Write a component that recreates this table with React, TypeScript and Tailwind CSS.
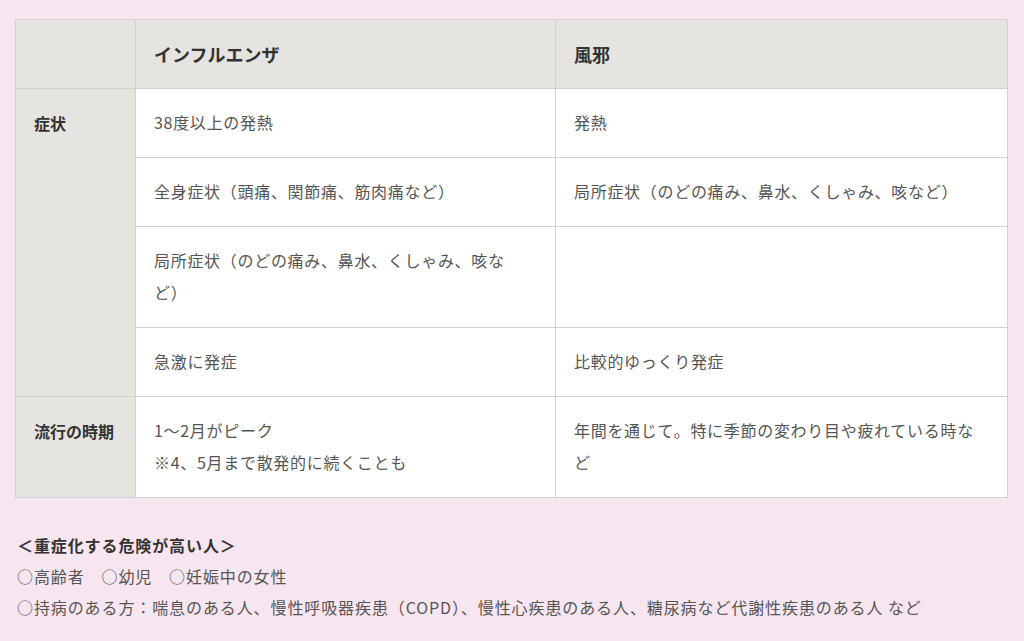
import React from 'react';

const font = { fontFamily: '"Noto Sans CJK JP", "Noto Sans", sans-serif' };

interface Row {
  head?: string;
  span?: number;
  flu: React.ReactNode;
  cold: React.ReactNode;
}

const rows: Row[] = [
  { head: '症状', span: 4, flu: '38度以上の発熱', cold: '発熱' },
  { flu: '全身症状（頭痛、関節痛、筋肉痛など）', cold: '局所症状（のどの痛み、鼻水、くしゃみ、咳など）' },
  { flu: '局所症状（のどの痛み、鼻水、くしゃみ、咳など）', cold: '' },
  { flu: '急激に発症', cold: '比較的ゆっくり発症' },
  {
    head: '流行の時期',
    span: 1,
    flu: (
      <>
        1～2月がピーク
        <br />
        ※4、5月まで散発的に続くことも
      </>
    ),
    cold: '年間を通じて。特に季節の変わり目や疲れている時など',
  },
];

const App: React.FC = () => {
  return (
    <div className="min-h-[641px] w-[1024px] bg-[#f7e6ef] pt-[19px] px-[15px]" style={font}>
      <table className="w-[992px] border-collapse border border-[#d3d1ce] table-fixed">
        <colgroup>
          <col className="w-[120px]" />
          <col className="w-[420px]" />
          <col className="w-[452px]" />
        </colgroup>
        <thead>
          <tr className="h-[69px] bg-[#e6e4e1]">
            <th className="border border-[#d3d1ce]"></th>
            <th className="border border-[#d3d1ce] pl-[18px] text-left text-[18px] font-bold text-[#333]">
              インフルエンザ
            </th>
            <th className="border border-[#d3d1ce] pl-[18px] text-left text-[18px] font-bold text-[#333]">
              風邪
            </th>
          </tr>
        </thead>
        <tbody>
          {rows.map((r, i) => (
            <tr key={i}>
              {r.head && (
                <th
                  rowSpan={r.span}
                  className="border border-[#d3d1ce] bg-[#e6e4e1] pl-[18px] pt-[18px] align-top text-left text-[16px] leading-[32px] font-bold text-[#333]"
                >
                  {r.head}
                </th>
              )}
              <td className="border border-[#d3d1ce] bg-white pl-[18px] pr-[40px] pt-[17px] pb-[19px] align-top text-[16px] leading-[32px] tracking-[0.7px] text-[#555]">
                {r.flu}
              </td>
              <td className="border border-[#d3d1ce] bg-white pl-[18px] pr-[24px] pt-[17px] pb-[19px] align-top text-[16px] leading-[32px] tracking-[0.7px] text-[#555]">
                {r.cold}
              </td>
            </tr>
          ))}
        </tbody>
      </table>
      <div className="mt-[32px] pl-[2px] text-[16px] leading-[31px] tracking-[0.9px] text-[#555]">
        <p className="font-bold text-[#333]">＜重症化する危険が高い人＞</p>
        <p>○高齢者　○幼児　○妊娠中の女性</p>
        <p>○持病のある方：喘息のある人、慢性呼吸器疾患（COPD）、慢性心疾患のある人、糖尿病など代謝性疾患のある人 など</p>
      </div>
    </div>
  );
};

export default App;
